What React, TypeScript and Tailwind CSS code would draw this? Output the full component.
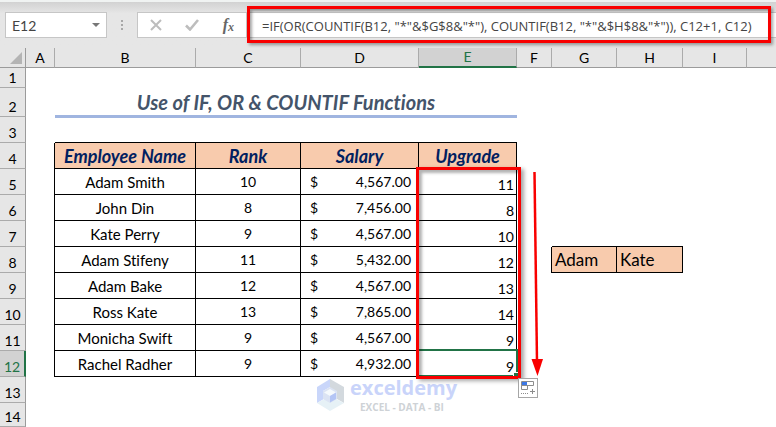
import { clsx } from "clsx";

const columns = [
  { name: "A", width: "w-[29px]" },
  { name: "B", width: "w-[141px]" },
  { name: "C", width: "w-[105px]" },
  { name: "D", width: "w-[118px]" },
  { name: "E", width: "w-[98px]" },
  { name: "F", width: "w-[35px]" },
  { name: "G", width: "w-[65px]" },
  { name: "H", width: "w-[66px]" },
  { name: "I", width: "w-[64px]" },
];

const employees = [
  { row: 5, name: "Adam Smith", rank: 10, salary: "4,567.00", upgrade: 11 },
  { row: 6, name: "John Din", rank: 8, salary: "7,456.00", upgrade: 8 },
  { row: 7, name: "Kate Perry", rank: 9, salary: "4,567.00", upgrade: 10 },
  { row: 8, name: "Adam Stifeny", rank: 11, salary: "5,432.00", upgrade: 12 },
  { row: 9, name: "Adam Bake", rank: 12, salary: "4,567.00", upgrade: 13 },
  { row: 10, name: "Ross Kate", rank: 13, salary: "7,865.00", upgrade: 14 },
  { row: 11, name: "Monicha Swift", rank: 9, salary: "4,567.00", upgrade: 9 },
  { row: 12, name: "Rachel Radher", rank: 9, salary: "4,932.00", upgrade: 9 },
];

const cell = "border-r border-b border-black";

function FormulaBar() {
  return (
    <div className="flex h-12 items-start border-t-2 border-[#f0f3f2] bg-linear-to-b from-[#d2d2d2] to-[#e6e6e6] to-25% pt-[10px] pl-[5px] text-[#444]">
      <div className="flex h-[26px] w-[102px] items-center border border-[#c6c6c6] bg-white">
        <input
          aria-label="Name box"
          defaultValue="E12"
          className="h-full w-0 grow bg-transparent pl-1.5 text-sm outline-none"
        />
        <button type="button" aria-label="Show names" className="px-1.5">
          <svg width="8" height="4" viewBox="0 0 8 4" fill="#777">
            <path d="M0 0h8L4 4z" />
          </svg>
        </button>
      </div>
      <div className="flex h-[26px] w-[30px] flex-col items-center justify-center gap-[2px]">
        <span className="size-[2px] bg-[#a8a8a8]" />
        <span className="size-[2px] bg-[#a8a8a8]" />
        <span className="size-[2px] bg-[#a8a8a8]" />
      </div>
      <div className="flex h-[26px] w-[110px] items-center justify-between border border-[#c6c6c6] bg-white pr-3 pl-3">
        <button type="button" aria-label="Cancel">
          <svg width="12" height="12" viewBox="0 0 12 12" fill="none" stroke="#bdbdbd" strokeWidth="2">
            <path d="M1 1l10 10M11 1L1 11" />
          </svg>
        </button>
        <button type="button" aria-label="Enter">
          <svg width="14" height="12" viewBox="0 0 14 12" fill="none" stroke="#bdbdbd" strokeWidth="2.6">
            <path d="M1 6.5l4 4L13 1" />
          </svg>
        </button>
        <button
          type="button"
          aria-label="Insert function"
          className="flex items-center font-['Liberation_Serif',serif] text-base leading-4 font-bold text-[#666] italic"
        >
          <span>f</span>
          <span className="pt-1 text-xs leading-3">x</span>
        </button>
      </div>
      <div className="relative ml-[2px] h-[26px] grow border-y border-l border-[#c6c6c6] bg-white">
        <input
          aria-label="Formula"
          defaultValue={'=IF(OR(COUNTIF(B12, "*"&$G$8&"*"), COUNTIF(B12, "*"&$H$8&"*")), C12+1, C12)'}
          className="h-full w-full bg-transparent pl-3 font-['Open_Sans',sans-serif] text-[13px] outline-none"
        />
        <div className="pointer-events-none absolute -top-[7px] right-[5px] -left-[3px] h-[37px] border-3 border-[#f90000] shadow-[2px_2px_3px_rgba(0,0,0,0.35),inset_2px_2px_3px_rgba(0,0,0,0.35)]" />
      </div>
    </div>
  );
}

function RowHeader({ n, active = false }: { n: number; active?: boolean }) {
  return (
    <th
      scope="row"
      className={clsx(
        "border-b border-b-[#ababab] p-0 text-center align-bottom text-sm leading-[18px] font-normal",
        active
          ? "border-r-2 border-r-[#217346] bg-[#d2d2d2] text-[#217346]"
          : "border-r border-r-[#9b9b9b] bg-[#e6e6e6]"
      )}
    >
      {n}
    </th>
  );
}

function Watermark() {
  return (
    <div className="pointer-events-none absolute top-[329px] left-[316px] flex items-center gap-1.5 font-['Open_Sans',sans-serif] font-bold">
      <svg width="28" height="32" viewBox="0 0 28 32">
        <path d="M14 0L28 8v16L14 16z" fill="#d3d9de" />
        <path d="M14 0L1 8v16l6-3.500V12l7-4z" fill="#c9d6fa" />
        <path d="M1 24l13-7 14 7-14 8z" fill="#e6f1f6" />
        <path d="M14 8l7 4v8l-7 4-7-4v-8z" fill="#dbe3f3" />
        <path d="M14 10l6 3.500-6 3.500-6-3.500z" fill="#f5f9fc" />
        <path d="M14 17l6-3.500V20l-6 3.500z" fill="#b4c5f5" />
      </svg>
      <div>
        <div className="text-xl leading-[22px] text-[#c9d4fa]">exceldemy</div>
        <div className="pt-[2px] pl-[10px] text-[10px] leading-3 text-[#ced2d6]">EXCEL - DATA - BI</div>
      </div>
    </div>
  );
}

function Annotations() {
  return (
    <>
      {/* active cell */}
      <div className="pointer-events-none absolute top-[301px] left-[417px] h-7 w-[101px] border-2 border-[#217346]">
        <span className="absolute -right-[2px] -bottom-[2px] size-[5px] border-t border-l border-white bg-[#217346]" />
      </div>
      <div className="pointer-events-none absolute top-[119px] left-[416px] h-[212px] w-[105px] border-3 border-[#f90000] shadow-[3px_2px_4px_rgba(0,0,0,0.35),inset_3px_3px_3px_rgba(0,0,0,0.3)]" />
      <svg className="pointer-events-none absolute top-[124px] left-[530px]" width="14" height="204" viewBox="0 0 14 204">
        <path d="M4.500 0L7 190" stroke="#f90000" strokeWidth="2.500" />
        <path d="M1.500 187h11.500L7.500 204z" fill="#f90000" />
      </svg>
      <button
        type="button"
        aria-label="Auto fill options"
        className="absolute top-[330px] left-[518px] flex size-5 items-center justify-center border border-[#a6a6a6] bg-white"
      >
        <svg width="14" height="14" viewBox="0 0 14 14" fill="none" stroke="#8c8c8c">
          <path d="M.5.5h12v4H.5z" />
          <path d="M.5 4.500h6v4h-6z" />
          <path d="M1 1h5v3H1z" fill="#3b78e7" stroke="none" />
          <path d="M0 12.500h8" strokeDasharray="1 1" />
          <path d="M11.500 8v5M9 10.500h5" />
        </svg>
      </button>
    </>
  );
}

export default function App() {
  return (
    <div className="min-h-screen overflow-hidden bg-white font-[Lato,sans-serif] text-black [font-variant-ligatures:none]">
      <FormulaBar />
      <div className="relative">
        <table className="w-full table-fixed border-separate border-spacing-0 text-sm leading-5">
          <colgroup>
            <col className="w-[26px]" />
            {columns.map((c) => (
              <col key={c.name} className={c.width} />
            ))}
            <col />
          </colgroup>
          <thead>
            <tr className="h-5 bg-[#e6e6e6]">
              <th aria-label="Select all" className="border-r border-b border-[#9b9b9b] p-0">
                <svg className="ml-auto mr-[3px]" width="12" height="12" viewBox="0 0 12 12" fill="#b4b4b4">
                  <path d="M12 0v12H0z" />
                </svg>
              </th>
              {columns.map((c) => (
                <th
                  key={c.name}
                  scope="col"
                  className={clsx(
                    "border-r border-r-[#ababab] p-0 text-sm leading-[18px] font-normal",
                    c.name === "E"
                      ? "border-b-2 border-b-[#217346] bg-[#d2d2d2] text-[#217346]"
                      : "border-b border-b-[#9b9b9b]"
                  )}
                >
                  {c.name}
                </th>
              ))}
              <th className="border-b border-[#9b9b9b] p-0" />
            </tr>
          </thead>
          <tbody>
            <tr className="h-5">
              <RowHeader n={1} />
              <td colSpan={10} />
            </tr>
            <tr className="h-[29px]">
              <RowHeader n={2} />
              <td />
              <td
                colSpan={4}
                className="border-b-2 border-[#a0b5e0] p-0 text-center text-xl leading-6 font-bold text-[#44546a] italic"
              >
                Use of IF, OR &amp; COUNTIF Functions
              </td>
              <td colSpan={5} />
            </tr>
            <tr className="h-[26px]">
              <RowHeader n={3} />
              <td />
              <td colSpan={4} className="border-t border-b border-t-[#a0b5e0] border-b-black p-0" />
              <td colSpan={5} />
            </tr>
            <tr className="h-[26px]">
              <RowHeader n={4} />
              <td className="border-r border-black p-0" />
              {["Employee Name", "Rank", "Salary", "Upgrade"].map((title) => (
                <th
                  key={title}
                  scope="col"
                  className={clsx(cell, "bg-[#f8cbad] p-0 text-lg leading-6 font-bold text-[#002060] italic")}
                >
                  {title}
                </th>
              ))}
              <td colSpan={5} />
            </tr>
            {employees.map((e) => (
              <tr key={e.row} className="h-[26px]">
                <RowHeader n={e.row} active={e.row === 12} />
                <td className="border-r border-black p-0" />
                <td className={clsx(cell, "p-0 text-center text-[15px]")}>{e.name}</td>
                <td className={clsx(cell, "p-0 text-center")}>{e.rank}</td>
                <td className={clsx(cell, "p-0")}>
                  <div className="flex justify-between pr-[7px] pl-[9px]">
                    <span>$</span>
                    <span>{e.salary}</span>
                  </div>
                </td>
                <td className={clsx(cell, "p-0 pr-[2px] text-right align-bottom leading-[18px]")}>{e.upgrade}</td>
                {e.row === 7 && (
                  <>
                    <td />
                    <td colSpan={2} className="border-b border-black p-0" />
                    <td colSpan={2} />
                  </>
                )}
                {e.row === 8 && (
                  <>
                    <td className="border-r border-black p-0" />
                    <td className={clsx(cell, "bg-[#f8cbad] p-0 pl-[3px] text-[17px] leading-6")}>Adam</td>
                    <td className={clsx(cell, "bg-[#f8cbad] p-0 pl-[3px] text-[17px] leading-6")}>Kate</td>
                    <td colSpan={2} />
                  </>
                )}
                {e.row !== 7 && e.row !== 8 && <td colSpan={5} />}
              </tr>
            ))}
            <tr className="h-[26px]">
              <RowHeader n={13} />
              <td colSpan={10} />
            </tr>
            <tr className="h-6">
              <RowHeader n={14} />
              <td colSpan={10} />
            </tr>
          </tbody>
        </table>
        <Watermark />
        <Annotations />
      </div>
    </div>
  );
}
